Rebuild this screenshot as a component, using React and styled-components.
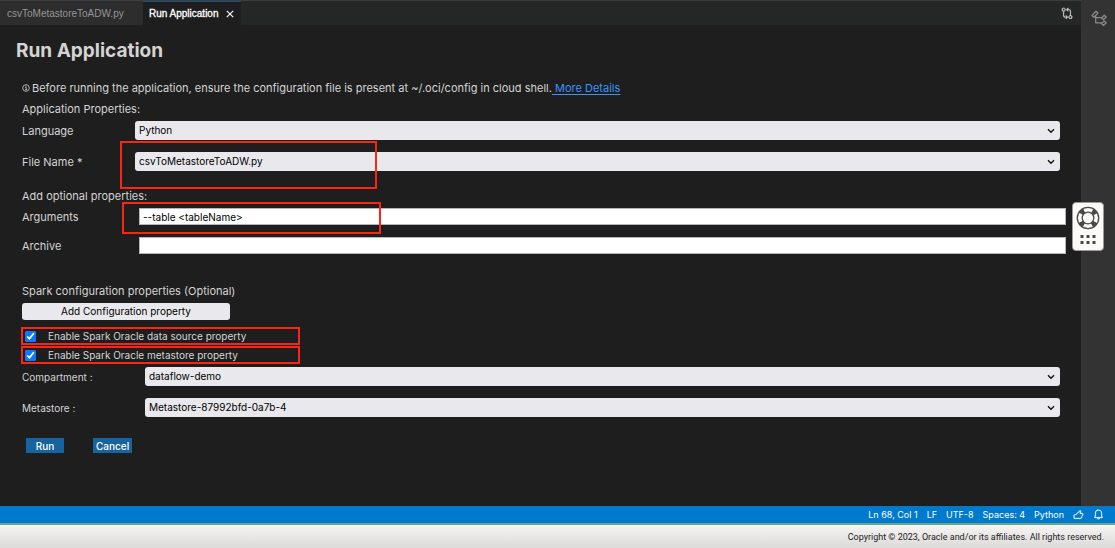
import React from 'react';
import styled, { createGlobalStyle } from 'styled-components'
import { VscGitCompare, VscThumbsup, VscBell } from 'react-icons/vsc'

const App = () => {
    return (
        <Page>
            <GlobalStyle />
            <Workbench>
                <Editor>
                    <TabBar>
                        <Tab type="button">csvToMetastoreToADW.py</Tab>
                        <Tab type="button" $active>Run Application <CloseIcon /></Tab>
                        <TabAction type="button" aria-label="Compare changes"><VscGitCompare /></TabAction>
                    </TabBar>
                    <RunForm />
                </Editor>
                <ActivityBar>
                    <OutlineIcon />
                </ActivityBar>
                <HelpWidget type="button" aria-label="Help">
                    <LifeRingIcon />
                    <GripIcon />
                </HelpWidget>
            </Workbench>
            <StatusBar>
                <span>Ln 68, Col 1</span>
                <span>LF</span>
                <span>UTF-8</span>
                <span>Spaces: 4</span>
                <span>Python</span>
                <VscThumbsup />
                <VscBell />
            </StatusBar>
            <Footer>Copyright © 2023, Oracle and/or its affiliates. All rights reserved.</Footer>
        </Page>
    )
}

const RunForm = () => (
    <Form onSubmit={(e) => e.preventDefault()}>
        <Title>Run Application</Title>
        <Notice>
            <InfoIcon />
            <p>
                Before running the application, ensure the configuration file is present at ~/.oci/config in cloud shell.
                <a href="#details"> More Details</a>
            </p>
        </Notice>
        <Group>
            <GroupTitle>Application Properties:</GroupTitle>
            <SelectField id="language" label="Language" value="Python" />
            <SelectField id="file" label="File Name *" value="csvToMetastoreToADW.py" mark={<FileMark />} />
        </Group>
        <Group>
            <GroupTitle>Add optional properties:</GroupTitle>
            <Row $labelWidth={117} $wide>
                <label htmlFor="arguments">Arguments</label>
                <Input id="arguments" type="text" defaultValue="--table <tableName>" />
                <ArgumentsMark />
            </Row>
            <Row $labelWidth={117} $wide>
                <label htmlFor="archive">Archive</label>
                <Input id="archive" type="text" />
            </Row>
        </Group>
        <Group $apart>
            <GroupTitle>Spark configuration properties (Optional)</GroupTitle>
            <AddButton type="button">Add Configuration property</AddButton>
        </Group>
        <Checks>
            <CheckLabel>
                <Checkbox type="checkbox" defaultChecked />
                Enable Spark Oracle data source property
            </CheckLabel>
            <CheckLabel>
                <Checkbox type="checkbox" defaultChecked />
                Enable Spark Oracle metastore property
            </CheckLabel>
        </Checks>
        <SelectField id="compartment" label="Compartment :" value="dataflow-demo" labelWidth={123} small />
        <SelectField id="metastore" label="Metastore :" value="Metastore-87992bfd-0a7b-4" labelWidth={123} small />
        <Actions>
            <ActionButton type="submit">Run</ActionButton>
            <ActionButton type="button">Cancel</ActionButton>
        </Actions>
    </Form>
)

const SelectField = ({ id, label, value, labelWidth = 113, small, mark }) => (
    <Row $labelWidth={labelWidth} $small={small}>
        <label htmlFor={id}>{label}</label>
        <SelectBox>
            <Select id={id} defaultValue={value}>
                <option>{value}</option>
            </Select>
            <ChevronIcon />
        </SelectBox>
        {mark}
    </Row>
)

const CloseIcon = () => (
    <svg width="8" height="8" viewBox="0 0 8 8" stroke="currentColor" strokeWidth="1.1">
        <path d="M0.8 0.8l6.4 6.4M7.2 0.8l-6.4 6.4" />
    </svg>
)

const InfoIcon = () => (
    <svg width="8" height="8" viewBox="0 0 8 8" fill="none" stroke="currentColor" strokeWidth="0.8">
        <circle cx="4" cy="4" r="3.3" />
        <path d="M3.2 3.4h1v2.2M3.1 5.7h2M3.9 1.8v0.9" />
    </svg>
)

const ChevronIcon = () => (
    <svg width="8" height="6" viewBox="0 0 8 6" fill="none" stroke="#111" strokeWidth="1.4">
        <path d="M1 1.2l3 3 3-3" />
    </svg>
)

const OutlineIcon = () => (
    <svg width="16" height="16" viewBox="0 0 16 16" fill="none" stroke="currentColor" strokeWidth="1.3" strokeLinejoin="round">
        <path d="M1 5.4l4-4.2 2 1.8-4 4.2z" />
        <path d="M4.7 5.6v7.2h6M4.7 7.6h6" />
        <path d="M10.6 7.9l2.6-2.6 2 1.7-2.7 2.6zM10.4 13.6l2.7-2.6 2.1 1.8-2.7 2.5z" />
    </svg>
)

const LifeRingIcon = () => (
    <svg width="24" height="24" viewBox="0 0 24 24" fill="none">
        <circle cx="12" cy="12" r="8.2" stroke="#4a4846" strokeWidth="5" strokeDasharray="4.4 8.48" strokeDashoffset="-4.24" />
        <circle cx="12" cy="12" r="10.7" stroke="#4a4846" strokeWidth="1.3" />
        <circle cx="12" cy="12" r="5.8" stroke="#4a4846" strokeWidth="1.3" />
    </svg>
)

const GripIcon = () => (
    <svg width="16" height="10" viewBox="0 0 16 10" fill="#4a4846">
        <path d="M0.5 0h3v3h-3zM6.5 0h3v3h-3zM12.5 0h3v3h-3zM0.5 6h3v3h-3zM6.5 6h3v3h-3zM12.5 6h3v3h-3z" />
    </svg>
)

const GlobalStyle = createGlobalStyle`
*{
    box-sizing: border-box;
    margin: 0;
    padding: 0;
}
body{
    background: #1e1e1e;
    color: #d4d4d4;
    font-family: Inter, "Liberation Sans", sans-serif;
    font-size: 11px;
}
button, input, select{
    font-family: inherit;
    font-size: 10px;
    border: none;
}
svg{
    flex-shrink: 0;
}
`
const Page = styled.div`
display: flex;
flex-direction: column;
min-height: 100vh;
`
const Workbench = styled.main`
position: relative;
display: flex;
flex: 1;
`
const Editor = styled.section`
flex: 1;
min-width: 0;
`
const TabBar = styled.div`
display: flex;
height: 25px;
background: #252626;
border-top: 1px solid #3a3d3d;
`
const Tab = styled.button`
display: flex;
align-items: center;
gap: 7px;
padding: 0 7px 0 ${({ $active }) => ($active ? '6px' : '7px')};
min-width: ${({ $active }) => ($active ? '97px' : '143px')};
background: ${({ $active }) => ($active ? '#1e1e1e' : '#2d2d2d')};
color: ${({ $active }) => ($active ? '#ffffff' : '#969696')};
border-top: 1px solid ${({ $active }) => ($active ? '#1f4f78' : '#2d2d2d')};
font-family: "Liberation Sans", sans-serif;
-webkit-text-stroke: ${({ $active }) => ($active ? '0.3px' : '0')};
`
const TabAction = styled.button`
margin-left: auto;
padding: 0 8px;
background: none;
color: #d0d0d0;
svg{
    display: block;
    width: 12px;
    height: 12px;
    stroke: currentColor;
    stroke-width: 0.4px;
}
`
const ActivityBar = styled.aside`
width: 34px;
padding: 10px;
background: #333333;
color: #8a8a8a;
svg{
    display: block;
}
`
const HelpWidget = styled.button`
position: absolute;
top: 202px;
right: 11px;
display: flex;
flex-direction: column;
align-items: center;
gap: 5px;
width: 32px;
height: 49px;
padding-top: 3px;
background: #fbfaf8;
border: 1px solid #9a9a98;
border-radius: 4px;
`
const Form = styled.form`
padding: 13px 21px 48px 22px;
`
const Title = styled.h1`
margin: 0 0 15px -6px;
font-size: 19px;
line-height: 26px;
font-weight: 700;
`
const Notice = styled.div`
display: flex;
align-items: center;
gap: 2px;
margin-bottom: 3px;
line-height: 18px;
a{
    color: #3794ff;
    white-space: pre;
    text-underline-offset: 2px;
}
`
const Group = styled.section`
margin-bottom: ${({ $apart }) => ($apart ? '7px' : '16px')};
padding-top: ${({ $apart }) => ($apart ? '12px' : '0')};
`
const GroupTitle = styled.h2`
font-size: 11px;
font-weight: 400;
line-height: 18px;
margin-bottom: 3px;
`
const Row = styled.div`
position: relative;
display: grid;
grid-template-columns: ${({ $labelWidth }) => $labelWidth}px 1fr;
align-items: center;
margin-right: ${({ $wide }) => ($wide ? '-6px' : '0')};
margin-bottom: 12px;
font-size: ${({ $small }) => ($small ? '10px' : '11px')};
`
const SelectBox = styled.div`
display: grid;
align-items: center;
svg{
    grid-area: 1 / 1;
    justify-self: end;
    margin-right: 5px;
    pointer-events: none;
}
`
const Select = styled.select`
grid-area: 1 / 1;
appearance: none;
width: 100%;
height: 19px;
padding: 0 4px 2px;
background: #e9e8ed;
border-radius: 3px;
color: #000000;
`
const Input = styled.input`
width: 100%;
height: 17px;
padding: 0 3px;
background: #ffffff;
border: 1px solid #b4b4bc;
color: #000000;
`
const AddButton = styled.button`
display: block;
width: 208px;
height: 17px;
padding-bottom: 2px;
background: #e9e8ed;
border-radius: 3px;
color: #000000;
`
const Mark = styled.span`
position: absolute;
border: 2px solid #fb2514;
pointer-events: none;
`
const FileMark = styled(Mark)`
top: -11px;
left: 98px;
width: 257px;
height: 48px;
`
const ArgumentsMark = styled(Mark)`
top: -6px;
left: 100px;
width: 259px;
height: 32px;
`
const Checks = styled.div`
display: flex;
flex-direction: column;
gap: 1px;
width: 279px;
margin: 0 0 3px -1px;
`
const CheckLabel = styled.label`
display: flex;
align-items: center;
gap: 12px;
height: 18px;
padding: 0 2px;
border: 2px solid #fb2514;
font-size: 10px;
`
const Checkbox = styled.input`
width: 11px;
height: 11px;
accent-color: #0a78ff;
`
const Actions = styled.div`
display: flex;
gap: 29px;
padding: 9px 4px 0;
`
const ActionButton = styled.button`
min-width: 38px;
height: 15px;
padding: 0 3px;
background: #1763a0;
color: #ffffff;
font-weight: 500;
`
const StatusBar = styled.div`
display: flex;
justify-content: flex-end;
align-items: center;
gap: 9px;
height: 19px;
padding-right: 11px;
background: #007acc;
border-bottom: 2px solid #6aa586;
color: #ffffff;
font-size: 9px;
svg{
    width: 11px;
    height: 11px;
    stroke: currentColor;
    stroke-width: 0.4px;
}
`
const Footer = styled.footer`
height: 23px;
padding-right: 11px;
background: linear-gradient(#f7f5f3, #dcdad8);
color: #1c1c1c;
font-family: Roboto, sans-serif;
font-size: 9px;
line-height: 25px;
text-align: right;
`
export default App
